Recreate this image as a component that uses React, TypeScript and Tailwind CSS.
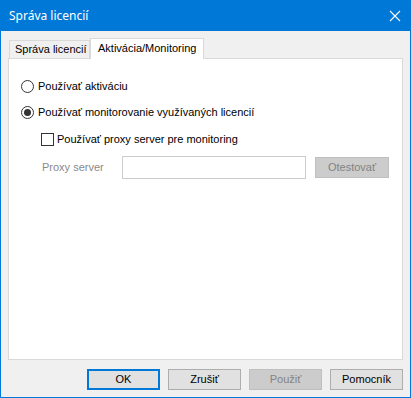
import React from "react";

function Radio({ checked }: { checked?: boolean }) {
  return (
    <span className="flex h-[13px] w-[13px] shrink-0 items-center justify-center rounded-full border border-[#333333] bg-white">
      {checked && <span className="h-[7px] w-[7px] rounded-full bg-[#333333]" />}
    </span>
  );
}

function DialogButton({
  label,
  primary,
  disabled,
}: {
  label: string;
  primary?: boolean;
  disabled?: boolean;
}) {
  let cls = "border-[#adadad] bg-[#e1e1e1] text-black";
  if (primary) cls = "border-2 border-[#0078d7] bg-[#e1e1e1] text-black";
  if (disabled) cls = "border-[#bfbfbf] bg-[#cccccc] text-[#838383]";
  return (
    <div
      className={`flex h-[21px] w-[73px] items-center justify-center border text-[11px] ${cls}`}
    >
      {label}
    </div>
  );
}

export default function App() {
  return (
    <div className="flex h-[398px] w-[411px] flex-col border-x border-b border-[#0078d7] bg-[#f0f0f0] font-['Liberation_Sans',Arial,sans-serif] text-[11px] leading-[13px] text-black">
      {/* title bar */}
      <div className="flex h-[31px] shrink-0 items-center justify-between bg-[#0078d7] pl-[8px] pr-[9px] text-white">
        <span className="font-['Noto_Sans',sans-serif] text-[12px]">Správa licencií</span>
        <svg width="12" height="12" viewBox="0 0 12 12" className="mt-[1px]">
          <path d="M1 1 L11 11 M11 1 L1 11" stroke="white" strokeWidth="1.1" />
        </svg>
      </div>

      <div className="flex flex-1 flex-col px-[7px] pt-[7px]">
        {/* tabs */}
        <div className="relative z-10 ml-[1px] flex h-[20px] items-end">
          <div className="flex h-[18px] w-[81px] items-center border border-b-0 border-[#d9d9d9] bg-[#f0f0f0] pl-[5px]">
            Správa licencií
          </div>
          <div className="-mb-px flex h-[21px] w-[114px] items-center border border-b-0 border-[#d9d9d9] bg-white pb-[2px] pl-[7px]">
            Aktivácia/Monitoring
          </div>
        </div>

        {/* panel */}
        <div className="flex h-[302px] w-[395px] flex-col border border-[#d9d9d9] bg-white pl-[12px] pt-[21px]">
          <div className="flex h-[13px] items-center gap-[4px]">
            <Radio />
            <span>Používať aktiváciu</span>
          </div>
          <div className="mt-[13px] flex h-[13px] items-center gap-[4px]">
            <Radio checked />
            <span>Používať monitorovanie využívaných licencií</span>
          </div>
          <div className="ml-[20px] mt-[14px] flex h-[13px] items-center gap-[3px]">
            <span className="h-[13px] w-[13px] shrink-0 border border-[#333333] bg-white" />
            <span>Používať proxy server pre monitoring</span>
          </div>
          <div className="ml-[21px] mt-[10px] flex h-[23px] items-center">
            <span className="w-[80px] text-[#8a8a8a]">Proxy server</span>
            <div className="h-[23px] w-[184px] border border-[#cccccc] bg-white" />
            <div className="ml-[9px] flex h-[21px] w-[74px] items-center justify-center border border-[#bfbfbf] bg-[#cccccc] text-[#838383]">
              Otestovať
            </div>
          </div>
        </div>

        {/* buttons */}
        <div className="mt-[9px] flex justify-end gap-[8px]">
          <DialogButton label="OK" primary />
          <DialogButton label="Zrušiť" />
          <DialogButton label="Použiť" disabled />
          <DialogButton label="Pomocník" />
        </div>
      </div>
    </div>
  );
}
